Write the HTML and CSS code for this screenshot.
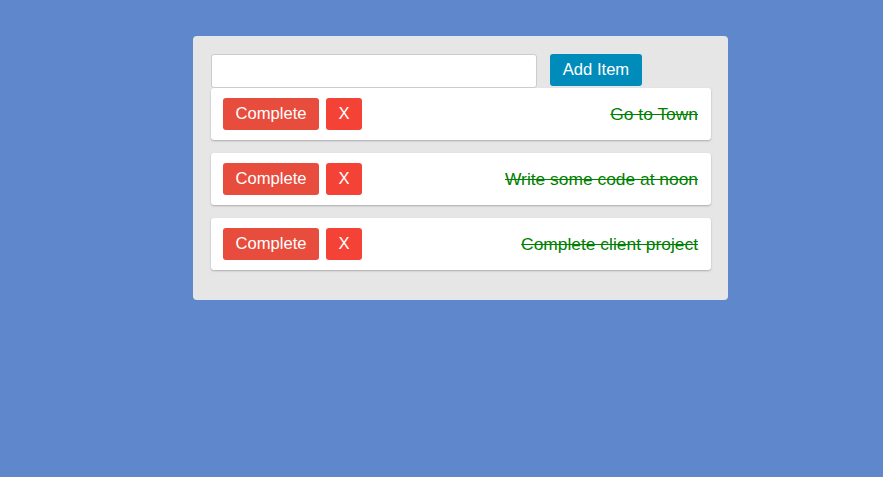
FILE: index.html
```html
<!DOCTYPE html>
<html>
<head>
<meta charset="utf-8">
<link rel="stylesheet" href="styles.css">
</head>
<body>
<div class="app">
  <div class="adder">
    <input class="field" type="text">
    <button class="add-btn">Add Item</button>
  </div>
  <ul class="list">
    <li class="card">
      <div class="actions"><button class="btn complete">Complete</button><button class="btn remove">X</button></div>
      <span class="label done">Go to Town</span>
    </li>
    <li class="card">
      <div class="actions"><button class="btn complete">Complete</button><button class="btn remove">X</button></div>
      <span class="label done">Write some code at noon</span>
    </li>
    <li class="card">
      <div class="actions"><button class="btn complete">Complete</button><button class="btn remove">X</button></div>
      <span class="label done">Complete client project</span>
    </li>
  </ul>
</div>
</body>
</html>
```
FILE: styles.css
```css
html, body {
  margin: 0;
  padding: 0;
}
body {
  background: #5e88cb;
  font-family: "Liberation Sans", Arial, sans-serif;
  min-height: 477px;
  padding: 36px 0 0 193px;
  box-sizing: border-box;
}
.app {
  width: 535px;
  box-sizing: border-box;
  background: #e6e6e6;
  border-radius: 4px;
  padding: 18px 17px 16px 18px;
}
.adder {
  display: flex;
  align-items: flex-start;
  gap: 13px;
  height: 34px;
}
.field {
  width: 326px;
  height: 34px;
  box-sizing: border-box;
  border: 1px solid #cccccc;
  border-radius: 3px;
  background: #fff;
  margin: 0;
  padding: 0 8px;
  font: 16px "Liberation Sans", Arial, sans-serif;
}
.add-btn {
  width: 92px;
  height: 32px;
  border: none;
  border-radius: 3px;
  background: #008cba;
  color: #fff;
  font: 16.6px "Liberation Sans", Arial, sans-serif;
  padding: 0;
  margin: 0;
}
.list {
  list-style: none;
  margin: 0;
  padding: 0;
}
.card {
  display: flex;
  align-items: center;
  justify-content: space-between;
  height: 52px;
  box-sizing: border-box;
  background: #fff;
  border-radius: 3px;
  box-shadow: 0 1px 2px rgba(0, 0, 0, 0.25);
  padding: 0 13px 0 12px;
  margin-bottom: 13px;
}
.card:last-child {
  margin-bottom: 14px;
}
.actions {
  display: flex;
  gap: 7px;
}
.btn {
  height: 32px;
  border: none;
  border-radius: 3px;
  color: #fff;
  font: 16.6px "Liberation Sans", Arial, sans-serif;
  padding: 0;
  margin: 0;
}
.complete {
  width: 96px;
  background: #e74c3c;
}
.remove {
  width: 36px;
  background: #f44336;
}
.label {
  font-size: 17.4px;
  color: #008000;
}
.done {
  text-decoration: line-through;
}
```
